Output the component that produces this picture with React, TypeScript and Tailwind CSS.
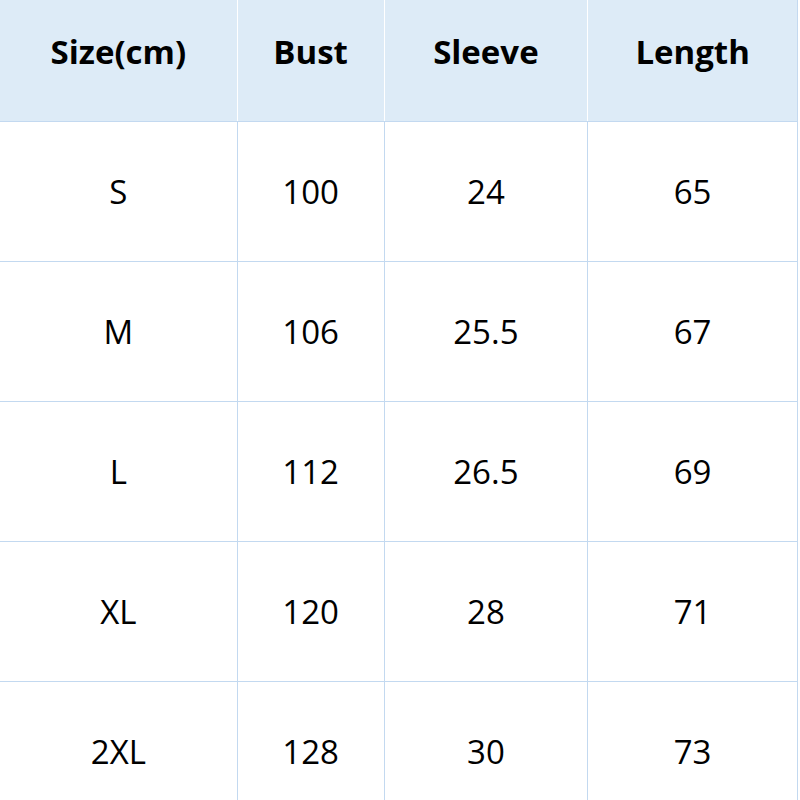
const headers = ['Size(cm)', 'Bust', 'Sleeve', 'Length']

const rows = [
  ['S', '100', '24', '65'],
  ['M', '106', '25.5', '67'],
  ['L', '112', '26.5', '69'],
  ['XL', '120', '28', '71'],
  ['2XL', '128', '30', '73'],
]

// column widths include the 1px right border
const widths = ['w-[238px]', 'w-[147px]', 'w-[204px]', 'w-[209px]']

export default function App() {
  return (
    <div
      className="w-[800px] h-[800px] bg-white overflow-hidden text-black"
      style={{ fontFamily: '"Open Sans", "Noto Sans", sans-serif' }}
    >
      <div className="w-[798px] border-r border-[#c3d9f0]">
        {/* header */}
        <div className="flex h-[122px] bg-[#ddebf7] border-b border-[#c3d9f0]">
          {headers.map((h, i) => (
            <div
              key={h}
              className={`${widths[i]} flex items-center justify-center pb-[18px] text-[33px] font-bold ${
                i < 3 ? 'border-r border-white' : ''
              }`}
            >
              {h}
            </div>
          ))}
        </div>

        {/* body */}
        {rows.map((row) => (
          <div key={row[0]} className="flex h-[140px] border-b border-[#c3d9f0]">
            {row.map((cell, i) => (
              <div
                key={i}
                className={`${widths[i]} flex items-center justify-center text-[33px] ${
                  i < 3 ? 'border-r border-[#c3d9f0]' : ''
                }`}
              >
                {cell}
              </div>
            ))}
          </div>
        ))}
      </div>
    </div>
  )
}
